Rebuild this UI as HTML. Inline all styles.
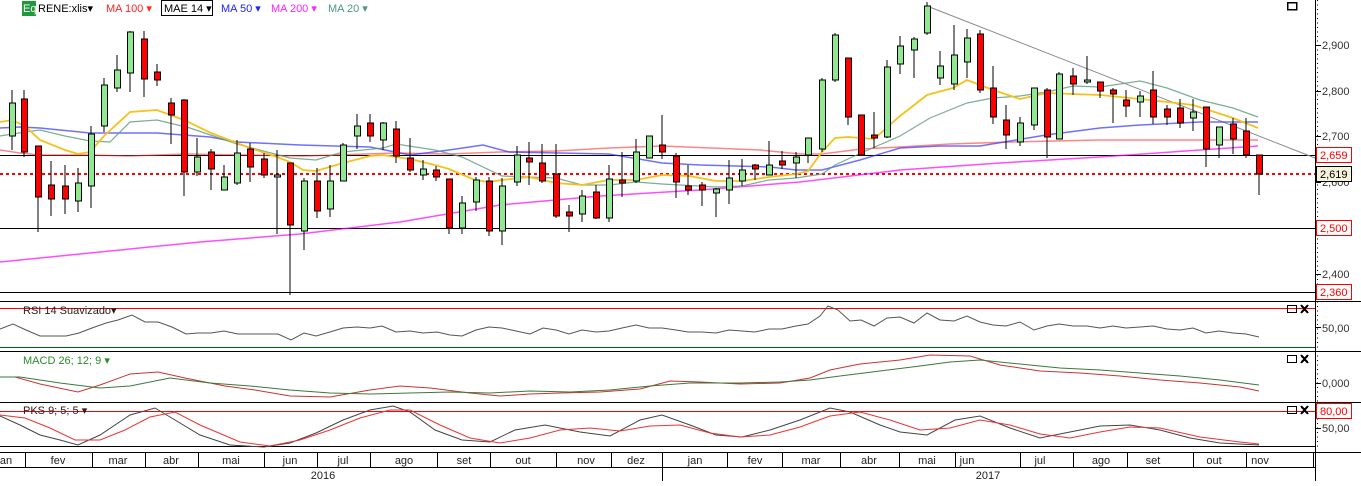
<!DOCTYPE html>
<html><head><meta charset="utf-8"><style>
body{margin:0;background:#fff;width:1361px;height:481px;overflow:hidden;font-family:"Liberation Sans",sans-serif}
svg text{font-family:"Liberation Sans",sans-serif;font-size:11px}
</style></head><body>
<svg width="1361" height="481" xmlns="http://www.w3.org/2000/svg" shape-rendering="crispEdges">
<rect width="1361" height="481" fill="#fff"/>
<!-- header -->
<rect x="22" y="1" width="14" height="15" fill="#1f9a3a"/>
<text x="23" y="12" fill="#fff" font-size="10">Eq</text>
<text x="38" y="12" fill="#000">RENE:xlis▾</text>
<text x="106" y="12" fill="#f22">MA 100 ▾</text>
<rect x="161.5" y="0.5" width="51" height="15" fill="none" stroke="#000"/>
<text x="164" y="12" fill="#000">MAE 14 ▾</text>
<text x="221" y="12" fill="#22f">MA 50 ▾</text>
<text x="271" y="12" fill="#f2f">MA 200 ▾</text>
<text x="328" y="12" fill="#4a9a7a">MA 20 ▾</text>
<rect x="1287.5" y="2.5" width="9" height="7" fill="none" stroke="#000" stroke-width="1.5"/>

<!-- horizontal levels -->
<g stroke="#000" stroke-width="1">
<line x1="0" y1="155.5" x2="1315" y2="155.5"/>
<line x1="0" y1="228.5" x2="1315" y2="228.5"/>
<line x1="0" y1="292.5" x2="1315" y2="292.5"/>
</g>
<line x1="0" y1="174" x2="1315" y2="174" stroke="#f00" stroke-width="2" stroke-dasharray="3,3"/>
<line x1="927" y1="6" x2="1315" y2="158" stroke="#888" stroke-width="1" shape-rendering="auto"/>

<!-- moving averages -->
<g fill="none" stroke-width="1.5" shape-rendering="auto">
<polyline stroke="#ff00ff" stroke-opacity=".7" points="0,262 100,252 200,242 300,234 400,222 500,205 600,196 700,190 800,182 900,170 1000,163 1100,157 1200,150 1258,146"/>
<polyline stroke="#f33" stroke-opacity=".6" points="0,150 20,153 40,155 90,155 130,156 184,154 250,155 303,156 396,153 449,154 500,152 556,151 609,148 662,146 760,150 800,154 822,154 861,149 900,147 950,144 1010,142 1100,140 1180,140 1258,140"/>
<polyline stroke="#33f" stroke-opacity=".7" points="0,128 20,127 40,128 60,130 90,133 157,133 210,137 237,142 300,145 370,147 410,155 449,150 483,145 509,152 609,154 662,163 700,165 770,167 796,170 822,170 860,160 900,148 940,146 980,146 1046,135 1100,128 1140,125 1200,122 1258,122"/>
<polyline stroke="#5a9a7a" stroke-opacity=".8" stroke-width="1.2" points="0,136 25,132 40,130 65,136 90,141 110,142 130,122 157,120 190,128 237,144 290,158 316,160 343,152 383,148 396,144 435,150 462,157 502,176 556,178 582,185 609,185 636,182 662,184 716,187 742,186 769,180 796,178 822,174 835,165 861,153 900,136 930,118 967,103 993,98 1020,96 1047,92 1073,86 1100,87 1140,81 1167,88 1200,100 1233,108 1258,117"/>
<polyline stroke="#f5c21b" stroke-width="1.8" points="0,122 12,120 25,126 40,140 65,150 78,154 90,152 104,136 130,112 157,110 184,120 211,133 250,148 277,157 290,162 303,170 316,171 343,163 370,156 383,155 396,157 410,159 435,165 449,169 475,180 489,182 502,180 529,177 556,183 582,185 609,180 636,180 662,175 689,176 716,181 742,181 769,177 796,174 808,171 822,152 835,138 848,137 874,139 900,116 927,95 953,88 967,80 993,90 1020,99 1047,93 1073,94 1100,95 1140,99 1167,102 1193,105 1233,118 1258,128"/>
</g>

<!-- candles -->
<g stroke="#000" stroke-width="1">
<line x1="12" y1="90" x2="12" y2="150"/><rect x="9.5" y="103" width="6" height="33" fill="#90e890"/>
<line x1="24" y1="90" x2="24" y2="157"/><rect x="21.5" y="99" width="6" height="53" fill="#f00"/>
<line x1="38" y1="146" x2="38" y2="232"/><rect x="35.5" y="146" width="6" height="51" fill="#f00"/>
<line x1="51" y1="161" x2="51" y2="216"/><rect x="48.5" y="185" width="6" height="14" fill="#f00"/>
<line x1="65" y1="165" x2="65" y2="214"/><rect x="62.5" y="186" width="6" height="13" fill="#f00"/>
<line x1="78" y1="168" x2="78" y2="212"/><rect x="75.5" y="183" width="6" height="18" fill="#90e890"/>
<line x1="91" y1="126" x2="91" y2="208"/><rect x="88.5" y="134" width="6" height="52" fill="#90e890"/>
<line x1="104" y1="78" x2="104" y2="132"/><rect x="101.5" y="85" width="6" height="41" fill="#90e890"/>
<line x1="117" y1="55" x2="117" y2="92"/><rect x="114.5" y="70" width="6" height="18" fill="#90e890"/>
<line x1="130" y1="31" x2="130" y2="92"/><rect x="127.5" y="32" width="6" height="41" fill="#90e890"/>
<line x1="144" y1="31" x2="144" y2="97"/><rect x="141.5" y="39" width="6" height="40" fill="#f00"/>
<line x1="157" y1="64" x2="157" y2="86"/><rect x="154.5" y="72" width="6" height="8" fill="#f00"/>
<line x1="171" y1="98" x2="171" y2="144"/><rect x="168.5" y="103" width="6" height="12" fill="#f00"/>
<line x1="184" y1="99" x2="184" y2="196"/><rect x="181.5" y="100" width="6" height="72" fill="#f00"/>
<line x1="197" y1="138" x2="197" y2="176"/><rect x="194.5" y="157" width="6" height="15" fill="#90e890"/>
<line x1="211" y1="149" x2="211" y2="190"/><rect x="208.5" y="152" width="6" height="17" fill="#f00"/>
<line x1="224" y1="165" x2="224" y2="190"/><rect x="221.5" y="177" width="6" height="13" fill="#90e890"/>
<line x1="237" y1="140" x2="237" y2="185"/><rect x="234.5" y="153" width="6" height="30" fill="#90e890"/>
<line x1="250" y1="143" x2="250" y2="182"/><rect x="247.5" y="149" width="6" height="18" fill="#f00"/>
<line x1="264" y1="153" x2="264" y2="178"/><rect x="261.5" y="159" width="6" height="16" fill="#f00"/>
<line x1="277" y1="150" x2="277" y2="234"/><rect x="274.5" y="175" width="6" height="2" fill="#90e890"/>
<line x1="290" y1="163" x2="290" y2="295"/><rect x="287.5" y="163" width="6" height="62" fill="#f00"/>
<line x1="304" y1="178" x2="304" y2="250"/><rect x="301.5" y="181" width="6" height="50" fill="#90e890"/>
<line x1="317" y1="168" x2="317" y2="218"/><rect x="314.5" y="181" width="6" height="30" fill="#f00"/>
<line x1="330" y1="165" x2="330" y2="217"/><rect x="327.5" y="181" width="6" height="28" fill="#90e890"/>
<line x1="343" y1="143" x2="343" y2="181"/><rect x="340.5" y="145" width="6" height="36" fill="#90e890"/>
<line x1="357" y1="114" x2="357" y2="149"/><rect x="354.5" y="126" width="6" height="10" fill="#90e890"/>
<line x1="370" y1="114" x2="370" y2="142"/><rect x="367.5" y="123" width="6" height="13" fill="#f00"/>
<line x1="383" y1="122" x2="383" y2="150"/><rect x="380.5" y="123" width="6" height="17" fill="#90e890"/>
<line x1="396" y1="121" x2="396" y2="163"/><rect x="393.5" y="129" width="6" height="27" fill="#f00"/>
<line x1="410" y1="138" x2="410" y2="172"/><rect x="407.5" y="158" width="6" height="12" fill="#f00"/>
<line x1="423" y1="160" x2="423" y2="180"/><rect x="420.5" y="169" width="6" height="6" fill="#90e890"/>
<line x1="436" y1="166" x2="436" y2="181"/><rect x="433.5" y="170" width="6" height="7" fill="#f00"/>
<line x1="449" y1="179" x2="449" y2="234"/><rect x="446.5" y="179" width="6" height="49" fill="#f00"/>
<line x1="462" y1="196" x2="462" y2="234"/><rect x="459.5" y="203" width="6" height="25" fill="#90e890"/>
<line x1="476" y1="177" x2="476" y2="211"/><rect x="473.5" y="180" width="6" height="22" fill="#90e890"/>
<line x1="489" y1="177" x2="489" y2="236"/><rect x="486.5" y="181" width="6" height="50" fill="#f00"/>
<line x1="502" y1="178" x2="502" y2="245"/><rect x="499.5" y="186" width="6" height="45" fill="#90e890"/>
<line x1="517" y1="146" x2="517" y2="186"/><rect x="514.5" y="155" width="6" height="27" fill="#90e890"/>
<line x1="529" y1="142" x2="529" y2="185"/><rect x="526.5" y="158" width="6" height="4" fill="#f00"/>
<line x1="542" y1="144" x2="542" y2="183"/><rect x="539.5" y="163" width="6" height="18" fill="#f00"/>
<line x1="556" y1="144" x2="556" y2="218"/><rect x="553.5" y="174" width="6" height="42" fill="#f00"/>
<line x1="569" y1="205" x2="569" y2="232"/><rect x="566.5" y="212" width="6" height="4" fill="#f00"/>
<line x1="582" y1="190" x2="582" y2="222"/><rect x="579.5" y="196" width="6" height="18" fill="#90e890"/>
<line x1="596" y1="185" x2="596" y2="219"/><rect x="593.5" y="192" width="6" height="26" fill="#f00"/>
<line x1="609" y1="165" x2="609" y2="222"/><rect x="606.5" y="179" width="6" height="39" fill="#90e890"/>
<line x1="622" y1="152" x2="622" y2="197"/><rect x="619.5" y="180" width="6" height="3" fill="#f00"/>
<line x1="636" y1="139" x2="636" y2="183"/><rect x="633.5" y="152" width="6" height="29" fill="#90e890"/>
<line x1="649" y1="136" x2="649" y2="158"/><rect x="646.5" y="136" width="6" height="22" fill="#90e890"/>
<line x1="662" y1="115" x2="662" y2="159"/><rect x="659.5" y="145" width="6" height="7" fill="#f00"/>
<line x1="676" y1="153" x2="676" y2="198"/><rect x="673.5" y="156" width="6" height="26" fill="#f00"/>
<line x1="688" y1="165" x2="688" y2="195"/><rect x="685.5" y="186" width="6" height="4" fill="#f00"/>
<line x1="702" y1="182" x2="702" y2="206"/><rect x="699.5" y="185" width="6" height="5" fill="#f00"/>
<line x1="716" y1="188" x2="716" y2="217"/><rect x="713.5" y="189" width="6" height="4" fill="#90e890"/>
<line x1="729" y1="160" x2="729" y2="204"/><rect x="726.5" y="178" width="6" height="12" fill="#90e890"/>
<line x1="742" y1="159" x2="742" y2="186"/><rect x="739.5" y="170" width="6" height="11" fill="#90e890"/>
<line x1="755" y1="164" x2="755" y2="180"/><rect x="752.5" y="165" width="6" height="4" fill="#f00"/>
<line x1="769" y1="141" x2="769" y2="175"/><rect x="766.5" y="165" width="6" height="10" fill="#90e890"/>
<line x1="782" y1="151" x2="782" y2="169"/><rect x="779.5" y="161" width="6" height="4" fill="#f00"/>
<line x1="796" y1="152" x2="796" y2="178"/><rect x="793.5" y="157" width="6" height="6" fill="#90e890"/>
<line x1="808" y1="138" x2="808" y2="163"/><rect x="805.5" y="138" width="6" height="17" fill="#90e890"/>
<line x1="822" y1="78" x2="822" y2="152"/><rect x="819.5" y="80" width="6" height="69" fill="#90e890"/>
<line x1="835" y1="33" x2="835" y2="82"/><rect x="832.5" y="35" width="6" height="45" fill="#90e890"/>
<line x1="848" y1="58" x2="848" y2="125"/><rect x="845.5" y="58" width="6" height="59" fill="#f00"/>
<line x1="861" y1="115" x2="861" y2="155"/><rect x="858.5" y="115" width="6" height="40" fill="#f00"/>
<line x1="874" y1="112" x2="874" y2="148"/><rect x="871.5" y="135" width="6" height="3" fill="#f00"/>
<line x1="887" y1="60" x2="887" y2="138"/><rect x="884.5" y="67" width="6" height="70" fill="#90e890"/>
<line x1="900" y1="36" x2="900" y2="74"/><rect x="897.5" y="46" width="6" height="18" fill="#90e890"/>
<line x1="914" y1="37" x2="914" y2="78"/><rect x="911.5" y="39" width="6" height="11" fill="#90e890"/>
<line x1="927" y1="2" x2="927" y2="35"/><rect x="924.5" y="6" width="6" height="27" fill="#90e890"/>
<line x1="940" y1="51" x2="940" y2="85"/><rect x="937.5" y="66" width="6" height="12" fill="#90e890"/>
<line x1="954" y1="25" x2="954" y2="90"/><rect x="951.5" y="55" width="6" height="29" fill="#90e890"/>
<line x1="967" y1="29" x2="967" y2="78"/><rect x="964.5" y="38" width="6" height="24" fill="#90e890"/>
<line x1="980" y1="30" x2="980" y2="93"/><rect x="977.5" y="34" width="6" height="56" fill="#f00"/>
<line x1="993" y1="66" x2="993" y2="124"/><rect x="990.5" y="88" width="6" height="29" fill="#f00"/>
<line x1="1006" y1="105" x2="1006" y2="149"/><rect x="1003.5" y="120" width="6" height="15" fill="#f00"/>
<line x1="1020" y1="117" x2="1020" y2="146"/><rect x="1017.5" y="123" width="6" height="19" fill="#90e890"/>
<line x1="1034" y1="88" x2="1034" y2="130"/><rect x="1031.5" y="88" width="6" height="37" fill="#90e890"/>
<line x1="1047" y1="88" x2="1047" y2="158"/><rect x="1044.5" y="90" width="6" height="47" fill="#f00"/>
<line x1="1059" y1="72" x2="1059" y2="139"/><rect x="1056.5" y="74" width="6" height="65" fill="#90e890"/>
<line x1="1073" y1="68" x2="1073" y2="95"/><rect x="1070.5" y="76" width="6" height="8" fill="#f00"/>
<line x1="1087" y1="56" x2="1087" y2="84"/><rect x="1084.5" y="80" width="6" height="2" fill="#90e890"/>
<line x1="1100" y1="82" x2="1100" y2="98"/><rect x="1097.5" y="82" width="6" height="9" fill="#f00"/>
<line x1="1113" y1="88" x2="1113" y2="123"/><rect x="1110.5" y="90" width="6" height="4" fill="#f00"/>
<line x1="1126" y1="90" x2="1126" y2="117"/><rect x="1123.5" y="100" width="6" height="6" fill="#f00"/>
<line x1="1140" y1="91" x2="1140" y2="117"/><rect x="1137.5" y="96" width="6" height="6" fill="#90e890"/>
<line x1="1153" y1="71" x2="1153" y2="124"/><rect x="1150.5" y="90" width="6" height="27" fill="#f00"/>
<line x1="1167" y1="105" x2="1167" y2="125"/><rect x="1164.5" y="109" width="6" height="8" fill="#f00"/>
<line x1="1180" y1="99" x2="1180" y2="128"/><rect x="1177.5" y="108" width="6" height="15" fill="#f00"/>
<line x1="1193" y1="99" x2="1193" y2="131"/><rect x="1190.5" y="112" width="6" height="6" fill="#90e890"/>
<line x1="1206" y1="107" x2="1206" y2="167"/><rect x="1203.5" y="107" width="6" height="42" fill="#f00"/>
<line x1="1219" y1="127" x2="1219" y2="158"/><rect x="1216.5" y="127" width="6" height="18" fill="#90e890"/>
<line x1="1233" y1="118" x2="1233" y2="154"/><rect x="1230.5" y="124" width="6" height="15" fill="#f00"/>
<line x1="1246" y1="118" x2="1246" y2="158"/><rect x="1243.5" y="131" width="6" height="24" fill="#f00"/>
<line x1="1259" y1="155" x2="1259" y2="195"/><rect x="1256.5" y="155" width="6" height="19" fill="#f00"/>
</g>

<!-- right axis -->
<line x1="1315.5" y1="0" x2="1315.5" y2="481" stroke="#000"/>
<g stroke="#000">
<line x1="1315" y1="45.5" x2="1321" y2="45.5"/><line x1="1315" y1="91.5" x2="1321" y2="91.5"/>
<line x1="1315" y1="136.5" x2="1321" y2="136.5"/><line x1="1315" y1="182.5" x2="1321" y2="182.5"/>
<line x1="1315" y1="274.5" x2="1321" y2="274.5"/><line x1="1315" y1="327.5" x2="1321" y2="327.5"/>
<line x1="1315" y1="383.5" x2="1321" y2="383.5"/><line x1="1315" y1="428.5" x2="1321" y2="428.5"/>
</g>
<g stroke="#000" stroke-dasharray="1,3.5"><line x1="1317.5" y1="0" x2="1317.5" y2="450"/></g>
<text x="1322" y="49" fill="#333">2,900</text>
<text x="1322" y="95" fill="#333">2,800</text>
<text x="1322" y="140" fill="#333">2,700</text>
<text x="1322" y="186" fill="#333">2,600</text>
<text x="1322" y="278" fill="#333">2,400</text>
<rect x="1316.5" y="147.5" width="35" height="15" fill="#fff" stroke="#f00"/><text x="1320" y="159" fill="#f00">2,659</text>
<rect x="1316.5" y="166.5" width="35" height="15" fill="#f8f4dc" stroke="#000"/><text x="1320" y="178" fill="#000">2,619</text>
<rect x="1316.5" y="220.5" width="35" height="15" fill="#fff" stroke="#f00"/><text x="1320" y="232" fill="#f00">2,500</text>
<rect x="1316.5" y="284.5" width="35" height="15" fill="#fff" stroke="#f00"/><text x="1320" y="296" fill="#f00">2,360</text>
<text x="1322" y="332" fill="#333">50,00</text>
<text x="1322" y="387" fill="#333">0,000</text>
<rect x="1316.5" y="403.5" width="35" height="15" fill="#fff" stroke="#f00"/><text x="1320" y="415" fill="#f00">80,00</text>
<text x="1322" y="432" fill="#333">50,00</text>

<!-- panel borders -->
<g stroke="#000">
<line x1="0" y1="301.5" x2="1361" y2="301.5"/>
<line x1="0" y1="351.5" x2="1361" y2="351.5"/>
<line x1="0" y1="402.5" x2="1361" y2="402.5"/>
<line x1="0" y1="446.5" x2="1315" y2="446.5"/>
<line x1="0" y1="452.5" x2="1361" y2="452.5"/>
<line x1="0" y1="467.5" x2="1315" y2="467.5"/>
</g>
<line x1="0" y1="308.5" x2="1315" y2="308.5" stroke="#f00"/>
<line x1="0" y1="347.5" x2="1315" y2="347.5" stroke="#060"/>
<line x1="0" y1="411.5" x2="1315" y2="411.5" stroke="#f00"/>
<!-- panel icons -->
<g fill="none" stroke="#000" stroke-width="1.3">
<rect x="1287.5" y="305.5" width="9" height="7"/><rect x="1287.5" y="355.5" width="9" height="7"/><rect x="1287.5" y="406.5" width="9" height="7"/>
<path d="M1301 305l7 8M1308 305l-7 8M1301 355l7 8M1308 355l-7 8M1301 406l7 8M1308 406l-7 8" stroke-width="2"/>
</g>
<text x="23" y="314" fill="#222">RSI 14 Suavizado▾</text>
<text x="23" y="364" fill="#2a8a2a">MACD 26; 12; 9 ▾</text>
<text x="23" y="414" fill="#222">PKS 9; 5; 5 ▾</text>

<g fill="none" stroke-width="1" shape-rendering="auto">
<polyline stroke="#555" points="0,329 13,324 26,330 40,336 66,336 79,333 92,328 106,323 118,320 132,315 145,322 158,322 172,327 186,334 198,333 211,333 224,331 238,334 252,334 264,334 278,334 291,340 304,333 316,336 330,332 343,328 357,327 370,328 382,326 396,332 410,331 423,333 437,332 450,335 462,336 476,330 489,327 502,328 516,331 530,334 543,328 556,330 569,334 582,330 596,332 609,331 622,328 636,325 649,328 662,328 676,330 688,332 702,332 716,333 729,330 742,331 755,332 769,329 782,329 796,326 808,324 820,316 828,306 838,310 850,321 861,320 874,326 887,318 900,317 914,323 927,313 940,320 954,321 967,316 980,322 993,325 1006,326 1020,322 1034,330 1047,326 1059,324 1073,326 1087,326 1100,328 1113,326 1126,328 1140,327 1153,326 1167,329 1180,330 1193,328 1206,333 1219,331 1233,333 1246,334 1259,337"/>
<polyline stroke="#c33" points="0,377 15,377 40,384 78,392 100,385 130,374 158,372 185,378 225,386 255,390 290,396 330,397 370,390 400,386 430,388 470,393 500,396 530,394 560,393 600,392 640,389 670,381 700,382 740,384 780,383 810,378 830,370 860,364 900,360 930,355 970,356 1000,365 1040,371 1080,373 1120,376 1160,380 1200,383 1240,387 1259,391"/>
<polyline stroke="#3a7a3a" points="0,377 20,377 60,383 100,388 130,386 170,378 210,383 250,386 290,390 330,393 370,394 410,393 450,392 490,393 530,391 570,392 610,390 650,386 690,383 740,383 780,382 810,380 840,376 880,371 920,366 950,362 980,360 1020,364 1060,368 1100,370 1140,373 1180,376 1220,380 1259,385"/>
<polyline stroke="#444" points="0,416 20,425 40,435 60,440 78,445 100,435 130,415 155,408 175,420 200,435 230,445 264,447 290,443 316,433 343,420 370,410 393,406 410,412 435,430 462,440 490,442 515,430 545,425 580,432 610,436 640,420 662,415 690,425 716,435 742,437 770,430 800,420 830,408 850,412 880,425 900,432 927,435 955,420 980,416 1010,428 1040,438 1070,432 1100,426 1130,425 1160,430 1190,438 1220,443 1259,445"/>
<polyline stroke="#e33" points="0,415 25,418 50,428 75,440 100,440 125,430 150,417 175,412 200,425 240,442 270,446 300,440 330,430 360,418 390,410 410,410 440,425 470,438 500,443 530,438 560,430 590,428 620,431 650,426 680,425 710,433 740,437 770,435 800,427 830,416 860,412 890,420 920,430 950,428 980,420 1010,425 1040,434 1070,438 1100,432 1130,427 1160,428 1200,437 1240,442 1259,444"/>
</g>

<!-- date axis -->
<g stroke="#000">
<line x1="25.5" y1="452" x2="25.5" y2="467"/><line x1="92.5" y1="452" x2="92.5" y2="467"/>
<line x1="145.5" y1="452" x2="145.5" y2="467"/><line x1="198.5" y1="452" x2="198.5" y2="467"/>
<line x1="264.5" y1="452" x2="264.5" y2="467"/><line x1="317.5" y1="452" x2="317.5" y2="467"/>
<line x1="370.5" y1="452" x2="370.5" y2="467"/><line x1="437.5" y1="452" x2="437.5" y2="467"/>
<line x1="490.5" y1="452" x2="490.5" y2="467"/><line x1="556.5" y1="452" x2="556.5" y2="467"/>
<line x1="611.5" y1="452" x2="611.5" y2="467"/><line x1="662.5" y1="452" x2="662.5" y2="481"/>
<line x1="727.5" y1="452" x2="727.5" y2="467"/><line x1="782.5" y1="452" x2="782.5" y2="467"/>
<line x1="840.5" y1="452" x2="840.5" y2="467"/><line x1="899.5" y1="452" x2="899.5" y2="467"/>
<line x1="955.5" y1="452" x2="955.5" y2="467"/><line x1="1020.5" y1="452" x2="1020.5" y2="467"/>
<line x1="1073.5" y1="452" x2="1073.5" y2="467"/><line x1="1127.5" y1="452" x2="1127.5" y2="467"/>
<line x1="1193.5" y1="452" x2="1193.5" y2="467"/><line x1="1246.5" y1="452" x2="1246.5" y2="467"/>
<line x1="1313.5" y1="452" x2="1313.5" y2="467"/>
</g>
<g fill="#222" text-anchor="middle">
<text x="6" y="464">an</text><text x="58" y="464">fev</text><text x="118" y="464">mar</text>
<text x="171" y="464">abr</text><text x="231" y="464">mai</text><text x="290" y="464">jun</text>
<text x="343" y="464">jul</text><text x="404" y="464">ago</text><text x="464" y="464">set</text>
<text x="523" y="464">out</text><text x="586" y="464">nov</text><text x="636" y="464">dez</text>
<text x="695" y="464">jan</text><text x="755" y="464">fev</text><text x="811" y="464">mar</text>
<text x="869" y="464">abr</text><text x="927" y="464">mai</text><text x="967" y="464">jun</text>
<text x="1040" y="464">jul</text><text x="1101" y="464">ago</text><text x="1153" y="464">set</text>
<text x="1214" y="464">out</text><text x="1260" y="464">nov</text>
<text x="323" y="479">2016</text><text x="988" y="479">2017</text>
</g>
</svg>
</body></html>
